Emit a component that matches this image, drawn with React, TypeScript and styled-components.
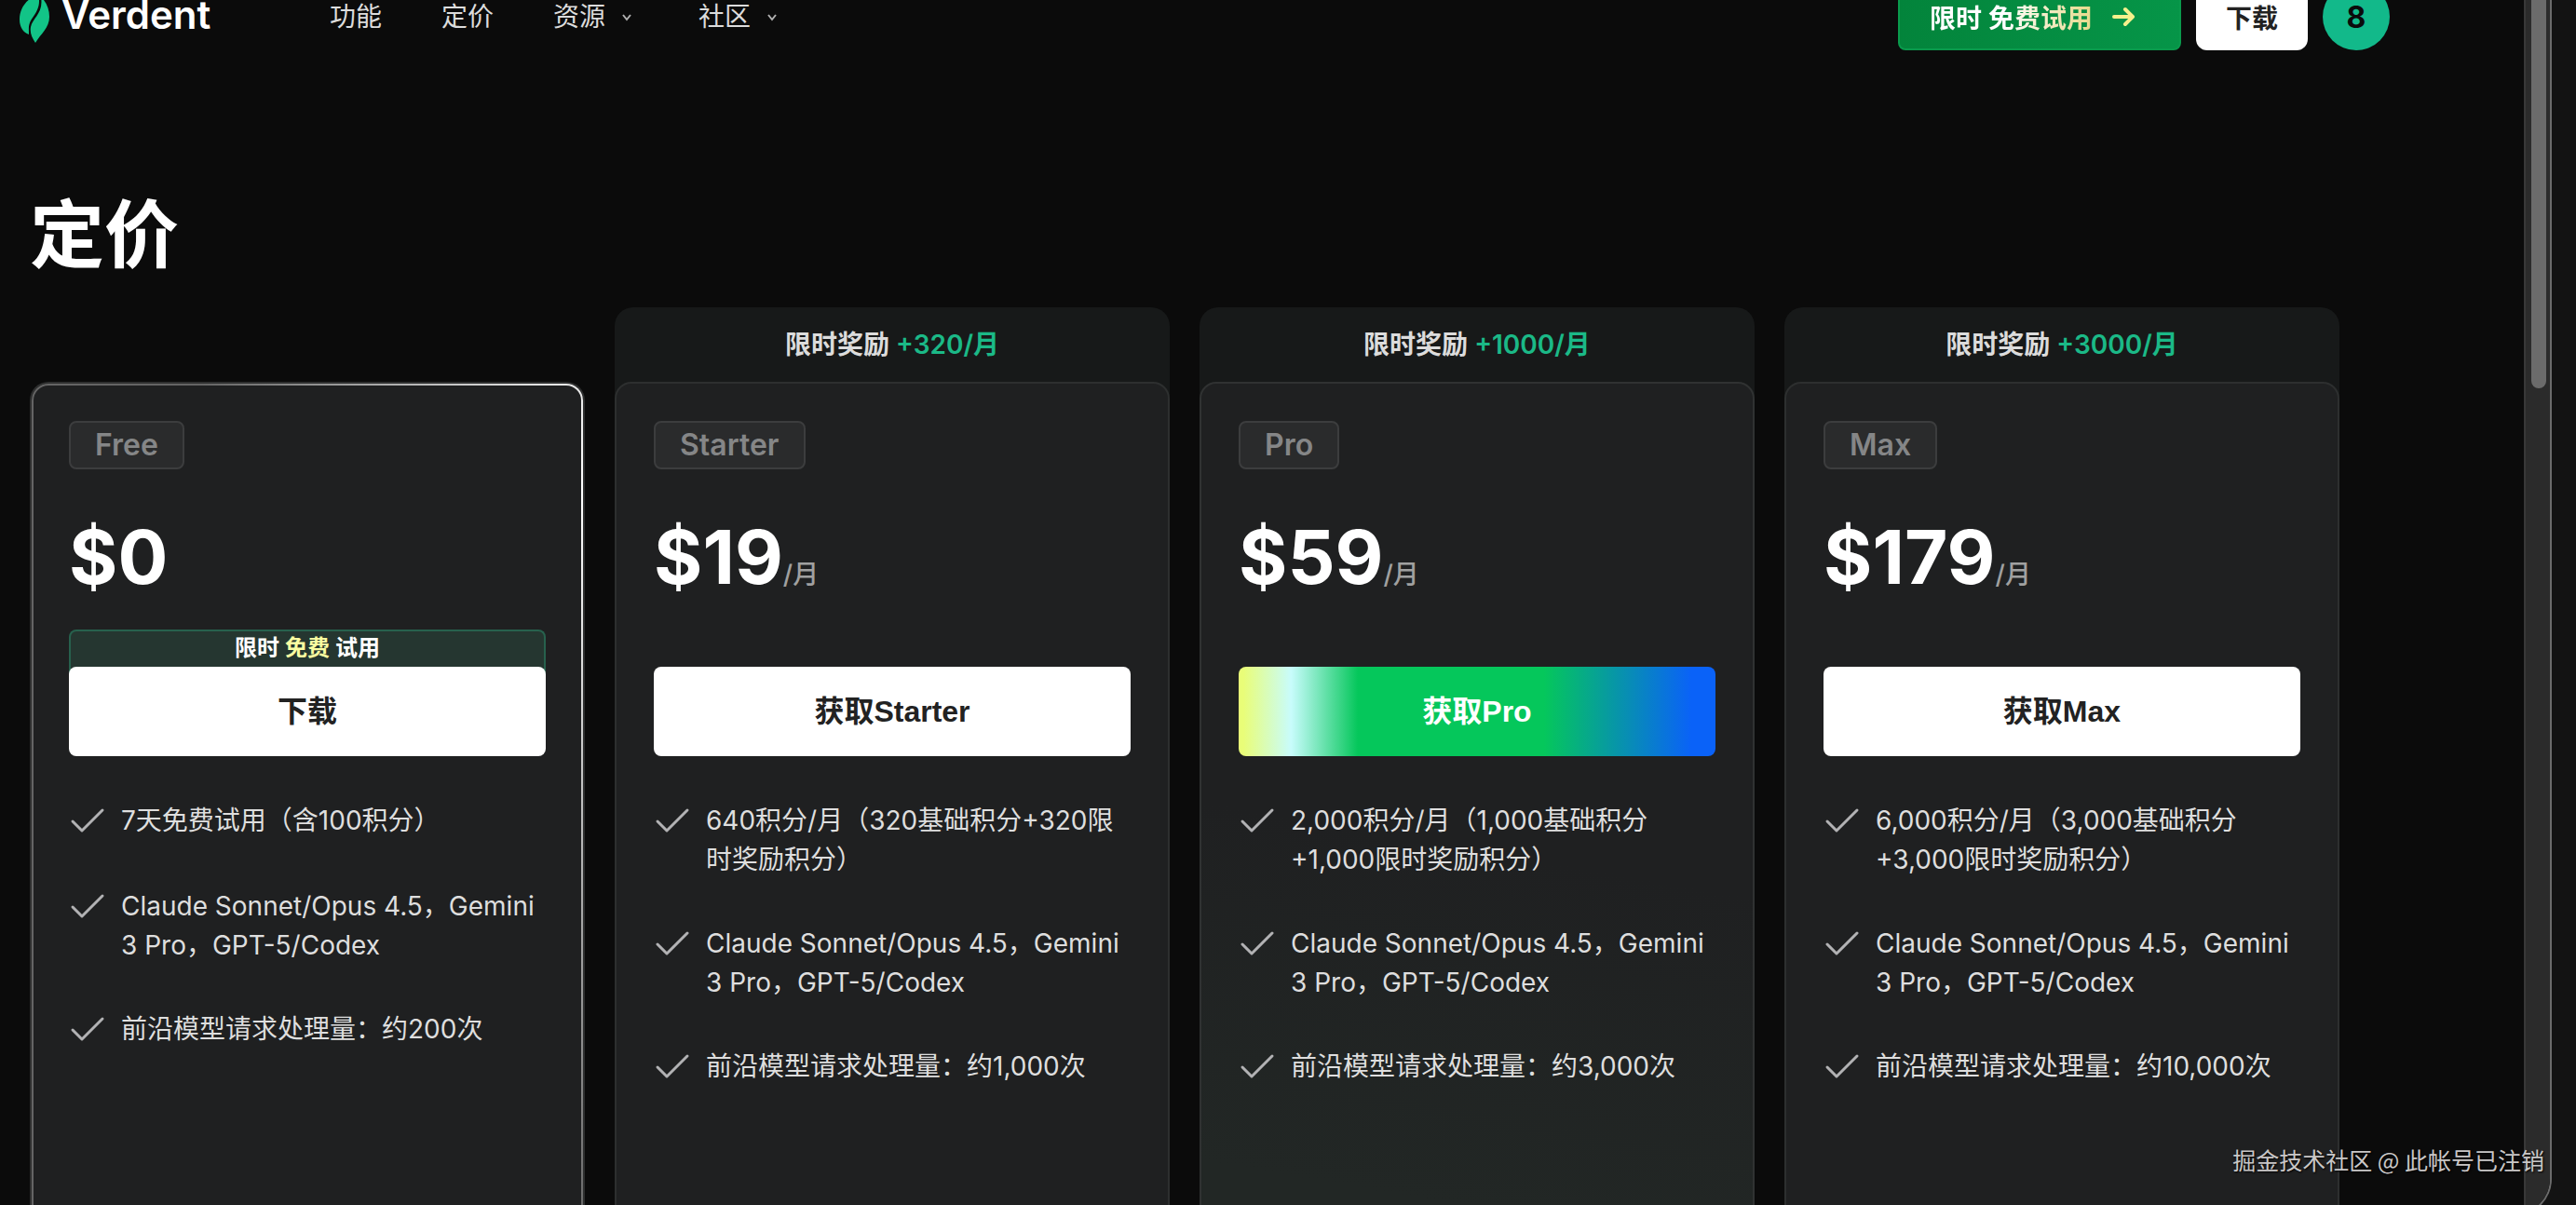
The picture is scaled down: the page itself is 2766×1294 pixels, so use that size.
import React from "react";
import styled, { createGlobalStyle } from "styled-components";

const CJK = `"Noto Sans CJK SC", sans-serif`;

const GlobalStyle = createGlobalStyle`
  * { box-sizing: border-box; }
  body {
    margin: 0;
    background: #131313;
    color: #fff;
    font-family: Inter, ${CJK};
    overflow: hidden;
  }
  button { font: inherit; border: 0; cursor: pointer; }
  a { color: inherit; text-decoration: none; }
  ul { list-style: none; margin: 0; padding: 0; }
  h1, h2, p { margin: 0; }
`;

const Screen = styled.div`
  position: relative;
  height: 100vh;
  overflow: hidden;
  padding-right: 26px;
`;

const Window = styled.div`
  display: flex;
  height: calc(100vh + 12px);
  border-right: 2px solid #6c6c6c;
  border-bottom: 2px solid #6c6c6c;
  border-bottom-right-radius: 40px;
  background: #0b0b0b;
  overflow: hidden;
`;

const Page = styled.div`
  flex: 1;
  min-width: 0;
  padding: 0 198px 0 32px;
  margin-top: -18px;
`;

const Track = styled.div`
  flex: none;
  width: 28px;
  border-left: 2px solid #383838;
  background: #2b2b2b;
  padding: 0 4px 0 6px;
`;

const Thumb = styled.div`
  height: 417px;
  border-radius: 0 0 8px 8px;
  background: #6b6b6b;
`;

const Header = styled.header`
  display: flex;
  align-items: center;
  height: 72px;
  margin: 0 -54px 0 -12px;
`;

const Brand = styled.a`
  display: flex;
  align-items: center;
  gap: 12px;
  width: 334px;
`;

const BrandName = styled.span`
  padding-bottom: 4px;
  font-size: 42px;
  font-weight: 600;
  line-height: 32px;
`;

const Nav = styled.nav`
  display: flex;
  flex: 1;
  gap: 64px;
`;

const NavLink = styled.a`
  display: flex;
  align-items: center;
  gap: 12px;
  color: #dcdcdc;
  font-size: 28px;
  line-height: 40px;
`;

const Actions = styled.div`
  display: flex;
  gap: 16px;
`;

const TrialButton = styled.button`
  display: flex;
  align-items: center;
  gap: 20px;
  width: 304px;
  height: 72px;
  padding: 0 32px;
  border: 2px solid #0a9a4c;
  border-radius: 8px;
  background: linear-gradient(90deg, #03843b, #069548);
  font-size: 28px;
  font-weight: 600;
`;

const TrialText = styled.span`
  background: linear-gradient(90deg, #fff 45%, #e6d98a);
  background-clip: text;
  color: transparent;
  white-space: nowrap;
`;

const DownloadButton = styled.button`
  width: 120px;
  height: 72px;
  border-radius: 12px;
  background: #fff;
  color: #222;
  font-size: 28px;
  font-weight: 600;
`;

const Avatar = styled.button`
  width: 72px;
  height: 72px;
  padding: 0;
  border-radius: 50%;
  background: #12b98a;
  color: #0b0b0b;
  font-size: 32px;
  font-weight: 700;
`;

const Title = styled.h1`
  margin-top: 138px;
  font-size: 80px;
  font-weight: 600;
  line-height: 120px;
`;

const Plans = styled.main`
  display: grid;
  grid-template-columns: repeat(4, 1fr);
  gap: 32px;
  margin-top: 18px;
`;

const Plan = styled.section`
  display: flex;
  flex-direction: column;
`;

const Bonus = styled.p<{ $empty?: boolean }>`
  height: 100px;
  margin-bottom: -20px;
  border-radius: 20px 20px 0 0;
  background: ${(p) => (p.$empty ? "transparent" : "#171919")};
  color: #dcdcdc;
  font-size: 28px;
  font-weight: 600;
  line-height: 80px;
  text-align: center;
`;

const Accent = styled.span`
  color: #1bb987;
`;

const cardLooks = {
  plain: `
    border-color: #2d2f2f;
    background: #1f2021;
  `,
  bright: `
    margin: 2px;
    padding: 38px;
    border-color: transparent;
    background:
      linear-gradient(#1f2021, #1f2021) padding-box,
      radial-gradient(70% 80% at 100% 12%, #fff, #646464) border-box;
    box-shadow: 0 0 0 2px #2e2f2f;
  `,
  glow: `
    border-color: #303232;
    background: linear-gradient(190deg, #1f2021 50%, #222725 85%);
  `,
};

type Look = keyof typeof cardLooks;

const Card = styled.div<{ $look: Look }>`
  flex: 1;
  min-height: 1000px;
  padding: 40px;
  border: 2px solid;
  border-radius: 18px;
  ${(p) => cardLooks[p.$look]}
`;

const Badge = styled.h2`
  width: fit-content;
  padding: 0 26px;
  border: 2px solid #3c3d3e;
  border-radius: 8px;
  background: #2a2b2c;
  color: #858687;
  font-size: 32px;
  font-weight: 600;
  line-height: 48px;
`;

const Price = styled.p`
  display: flex;
  align-items: baseline;
  height: 96px;
  margin-top: 46px;
  font-size: 80px;
  font-weight: 700;
  line-height: 96px;
`;

const Period = styled.span`
  color: #a0a0a0;
  font-size: 28px;
  font-weight: 500;
`;

const Offer = styled.p<{ $empty?: boolean }>`
  height: 48px;
  margin: 30px 0 -8px;
  border: 2px solid ${(p) => (p.$empty ? "transparent" : "#27614d")};
  border-bottom: 0;
  border-radius: 8px 8px 0 0;
  background: ${(p) => (p.$empty ? "transparent" : "#253630")};
  font-size: 24px;
  font-weight: 600;
  line-height: 36px;
  text-align: center;
`;

const Highlight = styled.span`
  color: #fbfda0;
`;

const BuyButton = styled.button<{ $rainbow?: boolean }>`
  position: relative;
  display: block;
  width: 100%;
  height: 96px;
  padding: 0 0 6px;
  border-radius: 8px;
  background: ${(p) =>
    p.$rainbow
      ? "linear-gradient(90deg, #e9fd78 1%, #c8fcfc 11%, #05c75b 25%, #05c75b 64%, #0a62f8 95%)"
      : "#fff"};
  color: ${(p) => (p.$rainbow ? "#fff" : "#222")};
  font-family: "Liberation Sans", ${CJK};
  font-size: 32px;
  font-weight: 700;
`;

const Features = styled.ul`
  display: flex;
  flex-direction: column;
  gap: 48px;
  margin-top: 48px;
`;

const Feature = styled.li`
  display: flex;
  gap: 16px;
  min-height: 44px;
  color: #dedede;
  font-size: 28px;
  line-height: 42px;

  svg { flex: none; }
`;

const Watermark = styled.div`
  position: absolute;
  right: 34px;
  bottom: 30px;
  color: #c9c7c7;
  font-family: ${CJK};
  font-size: 25px;
  line-height: 38px;
  text-shadow: 1px 1px 2px #000;
`;

const Leaf = () => (
  <svg width="34" height="56" viewBox="0 0 34 56" fill="#12c487">
    <path d="M21 4C8 9 1 19 1 31c0 8 4 14 10 16 0-7-1-11 4-18 5-7 9-14 6-25z" />
    <path d="M24 7c6 5 9 13 9 21 0 12-9 18-15 28-4-6-6-11-5-17 2-10 14-15 11-32z" />
  </svg>
);

const Chevron = () => (
  <svg width="24" height="10" viewBox="0 0 24 10" fill="none" stroke="#b0b0b0" strokeWidth="2">
    <path d="M7 3l4 5 4-5" />
  </svg>
);

const Arrow = () => (
  <svg width="26" height="22" viewBox="0 0 26 22" fill="none" stroke="#f5f08c" strokeWidth="4" strokeLinecap="round" strokeLinejoin="round">
    <path d="M3 11h20M15 3l8 8-8 8" />
  </svg>
);

const Check = () => (
  <svg width="40" height="44" viewBox="0 0 40 44" fill="none" stroke="#b2b2b4" strokeWidth="3" strokeLinecap="round" strokeLinejoin="round">
    <path d="M4 22l10 10L36 10" />
  </svg>
);

const MODELS = "Claude Sonnet/Opus 4.5，Gemini 3 Pro，GPT-5/Codex";

interface PlanData {
  name: string;
  price: string;
  bonus?: string;
  offer?: boolean;
  action: string;
  look: Look;
  features: string[];
}

const plans: PlanData[] = [
  {
    name: "Free",
    price: "$0",
    offer: true,
    action: "下载",
    look: "bright",
    features: ["7天免费试用（含100积分）", MODELS, "前沿模型请求处理量：约200次"],
  },
  {
    name: "Starter",
    price: "$19",
    bonus: "+320/月",
    action: "获取Starter",
    look: "plain",
    features: ["640积分/月（320基础积分+320限时奖励积分）", MODELS, "前沿模型请求处理量：约1,000次"],
  },
  {
    name: "Pro",
    price: "$59",
    bonus: "+1000/月",
    action: "获取Pro",
    look: "glow",
    features: ["2,000积分/月（1,000基础积分+1,000限时奖励积分）", MODELS, "前沿模型请求处理量：约3,000次"],
  },
  {
    name: "Max",
    price: "$179",
    bonus: "+3000/月",
    action: "获取Max",
    look: "plain",
    features: ["6,000积分/月（3,000基础积分+3,000限时奖励积分）", MODELS, "前沿模型请求处理量：约10,000次"],
  },
];

const PlanColumn = ({ plan }: { plan: PlanData }) => (
  <Plan>
    <Bonus $empty={!plan.bonus}>
      {plan.bonus && (
        <>
          限时奖励 <Accent>{plan.bonus}</Accent>
        </>
      )}
    </Bonus>
    <Card $look={plan.look}>
      <Badge>{plan.name}</Badge>
      <Price>
        {plan.price}
        {plan.bonus && <Period>/月</Period>}
      </Price>
      <Offer $empty={!plan.offer}>
        {plan.offer && (
          <>
            限时 <Highlight>免费</Highlight> 试用
          </>
        )}
      </Offer>
      <BuyButton $rainbow={plan.look === "glow"}>{plan.action}</BuyButton>
      <Features>
        {plan.features.map((text) => (
          <Feature key={text}>
            <Check />
            <span>{text}</span>
          </Feature>
        ))}
      </Features>
    </Card>
  </Plan>
);

export default function App() {
  return (
    <Screen>
      <GlobalStyle />
      <Window>
        <Page>
          <Header>
            <Brand href="#">
              <Leaf />
              <BrandName>Verdent</BrandName>
            </Brand>
            <Nav>
              <NavLink href="#features">功能</NavLink>
              <NavLink href="#pricing">定价</NavLink>
              <NavLink href="#resources">
                资源
                <Chevron />
              </NavLink>
              <NavLink href="#community">
                社区
                <Chevron />
              </NavLink>
            </Nav>
            <Actions>
              <TrialButton>
                <TrialText>限时 免费试用</TrialText>
                <Arrow />
              </TrialButton>
              <DownloadButton>下载</DownloadButton>
              <Avatar>8</Avatar>
            </Actions>
          </Header>
          <Title>定价</Title>
          <Plans>
            {plans.map((plan) => (
              <PlanColumn key={plan.name} plan={plan} />
            ))}
          </Plans>
        </Page>
        <Track>
          <Thumb />
        </Track>
      </Window>
      <Watermark>掘金技术社区 @ 此帐号已注销</Watermark>
    </Screen>
  );
}
